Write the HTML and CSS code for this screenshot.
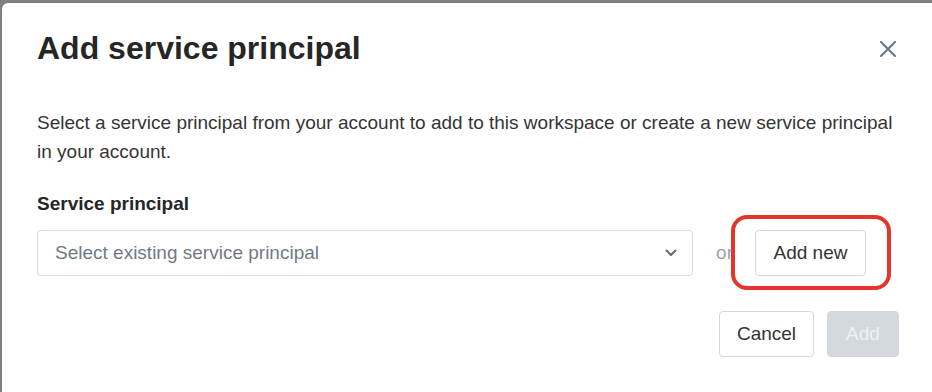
FILE: index.html
```html
<!DOCTYPE html>
<html>
<head>
<meta charset="utf-8">
<link rel="stylesheet" href="styles.css">
</head>
<body>
<div class="dialog">
  <div class="header">
    <h1 class="title">Add service principal</h1>
    <button class="close" aria-label="Close">
      <svg width="18" height="18" viewBox="0 0 18 18"><path d="M2 2 L16 16 M16 2 L2 16" stroke="#687585" stroke-width="2" stroke-linecap="round" fill="none"/></svg>
    </button>
  </div>
  <p class="desc">Select a service principal from your account to add to this workspace or create a new service principal in your account.</p>
  <div class="label">Service principal</div>
  <div class="row">
    <div class="select">
      <span class="placeholder">Select existing service principal</span>
      <svg class="chev" width="12" height="8" viewBox="0 0 12 8"><path d="M1.5 1.5 L6 6 L10.5 1.5" stroke="#5f6b7a" stroke-width="2" fill="none" stroke-linecap="round" stroke-linejoin="round"/></svg>
    </div>
    <span class="or">or</span>
    <div class="addnew-wrap">
      <button class="btn">Add new</button>
      <span class="highlight"></span>
    </div>
  </div>
  <div class="footer">
    <button class="btn">Cancel</button>
    <button class="btn primary" disabled>Add</button>
  </div>
</div>
</body>
</html>
```
FILE: styles.css
```css
html, body {
  margin: 0;
  padding: 0;
  background: #7f7f7f;
  height: 100%;
  overflow: hidden;
}
body {
  font-family: "Liberation Sans", Arial, sans-serif;
}
.dialog {
  margin: 3px 0 0 2px;
  background: #ffffff;
  border-top-left-radius: 6px;
  height: calc(100% - 3px);
  box-sizing: border-box;
  padding: 25px 0 0 35px;
}
.header {
  display: flex;
  align-items: center;
  justify-content: space-between;
  padding-right: 35px;
}
.title {
  margin: 0;
  font-size: 32px;
  line-height: 40px;
  font-weight: 700;
  color: #262626;
}
.close {
  border: none;
  background: transparent;
  padding: 0;
  width: 18px;
  height: 18px;
  display: flex;
  margin-top: 2px;
}
.desc {
  margin: 40px 0 0 0;
  padding-right: 33px;
  font-size: 19px;
  line-height: 29.3px;
  color: #353535;
}
.label {
  margin-top: 25px;
  font-size: 19px;
  line-height: 24px;
  font-weight: 700;
  color: #262626;
}
.row {
  display: flex;
  align-items: center;
  margin-top: 14px;
  padding-right: 66px;
}
.select {
  flex: 1;
  height: 46px;
  box-sizing: border-box;
  border: 1px solid #d6dce4;
  border-radius: 4px;
  display: flex;
  align-items: center;
  justify-content: space-between;
  padding: 0 15px 0 17px;
}
.placeholder {
  font-size: 19px;
  color: #6f7a88;
}
.chev {
  display: block;
}
.or {
  margin: 0 22px 0 23px;
  font-size: 19px;
  color: #9aa2ac;
}
.addnew-wrap {
  position: relative;
}
.btn {
  font-family: "Liberation Sans", Arial, sans-serif;
  height: 46px;
  box-sizing: border-box;
  border: 1px solid #d3d9e2;
  border-radius: 4px;
  background: #ffffff;
  color: #333333;
  font-size: 19px;
  padding: 0;
}
.addnew-wrap .btn {
  width: 111px;
}
.highlight {
  position: absolute;
  left: -24px;
  top: -15px;
  width: 160px;
  height: 75px;
  box-sizing: border-box;
  border: 4px solid #e5352b;
  border-radius: 16px;
  pointer-events: none;
}
.footer {
  display: flex;
  justify-content: flex-end;
  gap: 13px;
  margin-top: 35px;
  padding-right: 33px;
}
.footer .btn {
  width: 95px;
}
.footer .btn.primary {
  width: 72px;
  background: #d4d9e0;
  border-color: #d4d9e0;
  color: #eef1f5;
}
```
